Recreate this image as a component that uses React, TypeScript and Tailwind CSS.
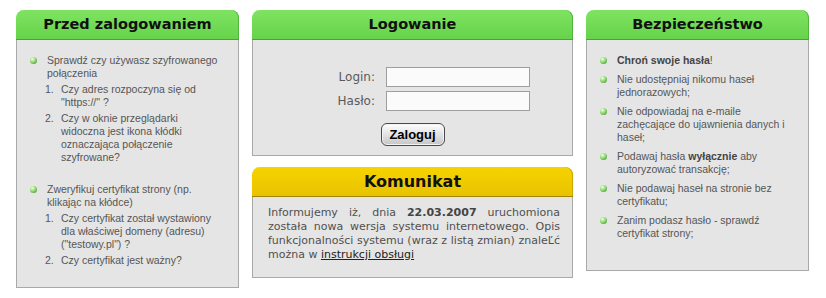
const head = "font-['DejaVu_Sans',sans-serif] font-bold text-[#111]";
const list = "font-['Liberation_Sans',Arial,sans-serif] text-[10.5px] leading-[13px] text-[#555]";

function Bullet() {
  return (
    <span className="mt-[3px] mr-[10px] h-[7px] w-[7px] shrink-0 rounded-full bg-[radial-gradient(circle_at_35%_30%,#f0ffe8_0%,#a6e48a_35%,#4f9d33_85%)]" />
  );
}

function Header({ title, yellow = false }: { title: string; yellow?: boolean }) {
  return (
    <div
      className={`flex h-[30px] items-center justify-center rounded-t-[8px] border-b ${
        yellow
          ? "border-[#a38600] bg-linear-to-b from-[#f7d300] to-[#e9c200] shadow-[inset_-1px_0_0_#c9a600]"
          : "border-[#46a534] bg-linear-to-b from-[#7fe362] to-[#66d34a] shadow-[inset_-1px_0_0_#52b43c]"
      }`}
    >
      <span className={`${head} ${yellow ? "text-[16px]" : "text-[14.5px]"}`}>{title}</span>
    </div>
  );
}

const Box = ({ className = "", children }: { className?: string; children: React.ReactNode }) => (
  <div className={`border-x border-b border-[#a9a9a9] bg-[#e5e5e5] ${className}`}>{children}</div>
);

function SubList({ items }: { items: string[] }) {
  return (
    <ol className="mt-[3px] -ml-[2px] space-y-[3px]">
      {items.map((t, i) => (
        <li key={t} className="flex">
          <span className="w-[16px] shrink-0">{i + 1}.</span>
          <span>{t}</span>
        </li>
      ))}
    </ol>
  );
}

export default function App() {
  return (
    <div className="flex h-[298px] w-[826px] items-start gap-[13px] bg-white pt-[10px] pl-[16px]">
      <div className="w-[223px]">
        <Header title="Przed zalogowaniem" />
        <Box className="h-[248px]">
          <ul className={`${list} pt-[14px] pl-[13px] pr-[16px]`}>
            <li className="flex">
              <Bullet />
              <div>
                Sprawdź czy używasz szyfrowanego połączenia
                <SubList
                  items={[
                    'Czy adres rozpoczyna się od "https://" ?',
                    "Czy w oknie przeglądarki widoczna jest ikona kłódki oznaczająca połączenie szyfrowane?",
                  ]}
                />
              </div>
            </li>
            <li className="mt-[19px] flex">
              <Bullet />
              <div>
                Zweryfikuj certyfikat strony (np. klikając na kłódce)
                <SubList
                  items={[
                    'Czy certyfikat został wystawiony dla właściwej domeny (adresu) ("testowy.pl") ?',
                    "Czy certyfikat jest ważny?",
                  ]}
                />
              </div>
            </li>
          </ul>
        </Box>
      </div>

      <div className="w-[321px]">
        <Header title="Logowanie" />
        <Box className="h-[116px] pt-[27px] font-['DejaVu_Sans',sans-serif] text-[12px] text-[#5a5a5a]">
          <div className="flex flex-col gap-[4px] pl-[72px]">
            <label className="flex items-center">
              <span className="mr-[11px] w-[50px] text-right">Login:</span>
              <input className="h-[20px] w-[144px] border border-[#9e9e9e] bg-[#fbfbfb] outline-none" />
            </label>
            <label className="flex items-center">
              <span className="mr-[11px] w-[50px] text-right">Hasło:</span>
              <input type="password" className="h-[20px] w-[144px] border border-[#9e9e9e] bg-[#fbfbfb] outline-none" />
            </label>
          </div>
          <div className="mt-[12px] flex justify-center">
            <button className="h-[23px] w-[64px] rounded-[6px] border border-[#4a4a4a] bg-linear-to-b from-[#ffffff] to-[#c6c6c6] font-['Liberation_Sans',Arial,sans-serif] text-[13px] font-bold text-black shadow-[inset_0_0_0_1px_#f4f4f4]">
              Zaloguj
            </button>
          </div>
        </Box>

        <div className="mt-[11px]">
          <Header title="Komunikat" yellow />
          <Box className="pt-[9px] pr-[12px] pb-[15px] pl-[15px]">
            <p className="text-justify font-['DejaVu_Sans',sans-serif] text-[11px] leading-[14px] text-[#505050]">
              Informujemy iż, dnia <b className="text-[#444]">22.03.2007</b> uruchomiona została nowa wersja systemu
              internetowego. Opis funkcjonalności systemu (wraz z listą zmian) znaleĽć można w{" "}
              <a href="#" className="text-[#222] underline">
                instrukcji obsługi
              </a>
            </p>
          </Box>
        </div>
      </div>

      <div className="w-[223px]">
        <Header title="Bezpieczeństwo" />
        <Box className="h-[231px]">
          <ul className={`${list} space-y-[6px] pt-[14px] pl-[13px] pr-[12px]`}>
            <li className="flex">
              <Bullet />
              <span>
                <b className="text-[#444]">Chroń swoje hasła</b>!
              </span>
            </li>
            <li className="flex">
              <Bullet />
              <span>Nie udostępniaj nikomu haseł jednorazowych;</span>
            </li>
            <li className="flex">
              <Bullet />
              <span>Nie odpowiadaj na e-maile zachęcające do ujawnienia danych i haseł;</span>
            </li>
            <li className="flex">
              <Bullet />
              <span>
                Podawaj hasła <b className="text-[#444]">wyłącznie</b> aby autoryzować transakcję;
              </span>
            </li>
            <li className="flex">
              <Bullet />
              <span>Nie podawaj haseł na stronie bez certyfikatu;</span>
            </li>
            <li className="flex">
              <Bullet />
              <span>Zanim podasz hasło - sprawdź certyfikat strony;</span>
            </li>
          </ul>
        </Box>
      </div>
    </div>
  );
}
